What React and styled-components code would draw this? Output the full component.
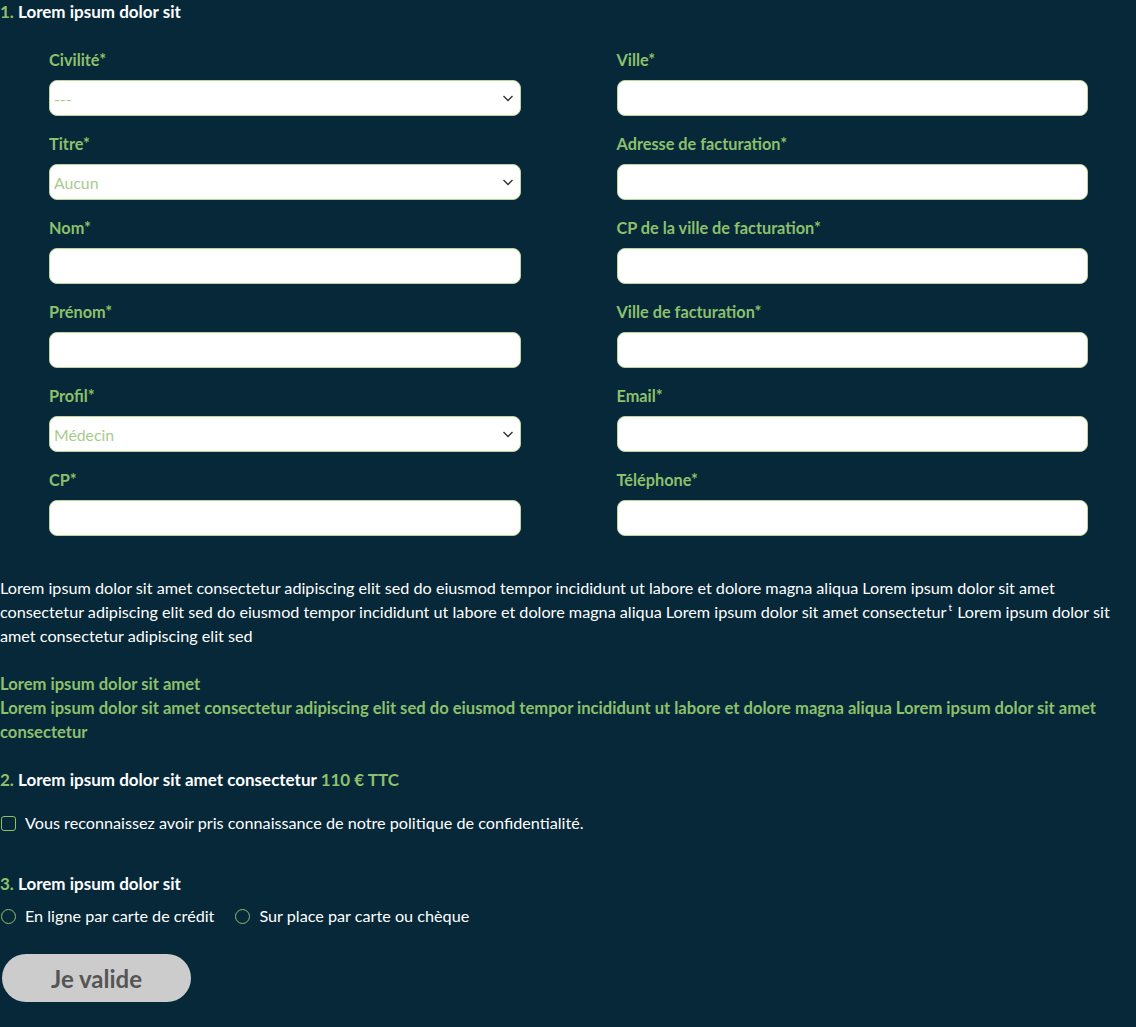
import React from "react";
import styled, { createGlobalStyle } from "styled-components";

const GREEN = "#8cc06c";
const BG = "#062838";

const Global = createGlobalStyle`
  html, body { margin: 0; padding: 0; background: ${BG}; }
  body { font-family: Lato, "Open Sans", sans-serif; color: #fff; }
`;

const Page = styled.div`
  width: 1136px;
  min-height: 1027px;
  background: ${BG};
  padding-bottom: 26px;
  box-sizing: border-box;
`;

const Heading = styled.h2`
  margin: 0;
  font-size: 17px;
  font-weight: 700;
  line-height: 24px;
  color: #fff;
  padding-top: ${(p) => p.$top || 0}px;
`;

const Num = styled.span`
  color: ${GREEN};
`;

const Price = styled.span`
  color: ${GREEN};
`;

const FormGrid = styled.div`
  display: grid;
  grid-template-columns: 1fr 1fr;
  column-gap: 96px;
  padding: 24px 48px 0 49px;
`;

const Column = styled.div`
  display: flex;
  flex-direction: column;
`;

const Field = styled.div`
  display: flex;
  flex-direction: column;
  height: 84px;
`;

const Label = styled.label`
  font-size: 16.3px;
  font-weight: 700;
  color: ${GREEN};
  line-height: 24px;
  margin-bottom: 8px;
`;

const Input = styled.input`
  box-sizing: border-box;
  width: 100%;
  height: 36px;
  border: 1px solid #bcd69a;
  border-radius: 8px;
  background: #fff;
  outline: none;
  font-family: inherit;
  font-size: 16px;
`;

const SelectWrap = styled.div`
  position: relative;
  width: 100%;
  height: 36px;
`;

const Select = styled.select`
  appearance: none;
  box-sizing: border-box;
  width: 100%;
  height: 36px;
  border: 1px solid #bcd69a;
  border-radius: 8px;
  background: #fff;
  color: #a6cc8c;
  font-family: inherit;
  font-size: 15.8px;
  padding: 0 4px;
  outline: none;
`;

const Chevron = styled.svg`
  position: absolute;
  right: 7px;
  top: 13px;
  width: 12px;
  height: 10px;
  pointer-events: none;
`;

const Paragraph = styled.p`
  margin: 24px 0 0;
  font-size: 16.2px;
  line-height: 24px;
  color: #fff;
`;

const GreenBlock = styled.p`
  margin: 24px 0 0;
  font-size: 16.6px;
  line-height: 24px;
  font-weight: 700;
  color: ${GREEN};
`;

const CheckRow = styled.label`
  display: flex;
  align-items: center;
  gap: 9px;
  margin-top: 19px;
  font-size: 16.2px;
  line-height: 24px;
  color: #fff;
`;

const Box = styled.span`
  width: 15px;
  height: 15px;
  box-sizing: border-box;
  border: 1.5px solid ${GREEN};
  border-radius: 3px;
  margin-left: 1px;
`;

const RadioRow = styled.div`
  display: flex;
  align-items: center;
  gap: 20px;
  margin-top: 8px;
`;

const RadioItem = styled.label`
  display: flex;
  align-items: center;
  gap: 9px;
  font-size: 16.2px;
  line-height: 24px;
  color: #fff;
`;

const Circle = styled.span`
  width: 15px;
  height: 15px;
  box-sizing: border-box;
  border: 1.5px solid ${GREEN};
  border-radius: 50%;
  margin-left: 1px;
`;

const Button = styled.button`
  margin: 26px 0 0 2px;
  width: 189px;
  height: 48px;
  border: none;
  border-radius: 24px;
  background: #cccccc;
  color: #555;
  font-family: inherit;
  font-size: 24px;
  font-weight: 700;
  cursor: pointer;
`;

const Sup = styled.span`
  display: inline-block;
  font-size: 10px;
  line-height: 10px;
  vertical-align: 7px;
  margin: 0 1px 0 2px;
`;

function ChevronIcon() {
  return (
    <Chevron viewBox="0 0 12 10">
      <path d="M1.5 3 L6 7.5 L10.5 3" fill="none" stroke="#333" strokeWidth="1.4" />
    </Chevron>
  );
}

function SelectField({ label, value }) {
  return (
    <Field>
      <Label>{label}</Label>
      <SelectWrap>
        <Select defaultValue={value}>
          <option value={value}>{value}</option>
        </Select>
        <ChevronIcon />
      </SelectWrap>
    </Field>
  );
}

function TextField({ label }) {
  return (
    <Field>
      <Label>{label}</Label>
      <Input type="text" />
    </Field>
  );
}

export default function App() {
  return (
    <Page>
      <Global />
      <Heading>
        <Num>1.</Num> Lorem ipsum dolor sit
      </Heading>
      <FormGrid>
        <Column>
          <SelectField label="Civilité*" value="---" />
          <SelectField label="Titre*" value="Aucun" />
          <TextField label="Nom*" />
          <TextField label="Prénom*" />
          <SelectField label="Profil*" value="Médecin" />
          <TextField label="CP*" />
        </Column>
        <Column>
          <TextField label="Ville*" />
          <TextField label="Adresse de facturation*" />
          <TextField label="CP de la ville de facturation*" />
          <TextField label="Ville de facturation*" />
          <TextField label="Email*" />
          <TextField label="Téléphone*" />
        </Column>
      </FormGrid>
      <Paragraph>
        Lorem ipsum dolor sit amet consectetur adipiscing elit sed do eiusmod tempor incididunt ut labore et dolore magna aliqua Lorem ipsum dolor sit amet consectetur adipiscing elit sed do eiusmod tempor incididunt ut labore et dolore magna aliqua Lorem ipsum dolor sit amet consectetur<Sup>t</Sup> Lorem ipsum dolor sit amet consectetur adipiscing elit sed
      </Paragraph>
      <GreenBlock>
        Lorem ipsum dolor sit amet
        <br />
        Lorem ipsum dolor sit amet consectetur adipiscing elit sed do eiusmod tempor incididunt ut labore et dolore magna aliqua Lorem ipsum dolor sit amet consectetur
      </GreenBlock>
      <Heading $top={24}>
        <Num>2.</Num> Lorem ipsum dolor sit amet consectetur <Price>110 € TTC</Price>
      </Heading>
      <CheckRow>
        <Box />
        Vous reconnaissez avoir pris connaissance de notre politique de confidentialité.
      </CheckRow>
      <Heading $top={37}>
        <Num>3.</Num> Lorem ipsum dolor sit
      </Heading>
      <RadioRow>
        <RadioItem>
          <Circle />
          En ligne par carte de crédit
        </RadioItem>
        <RadioItem>
          <Circle />
          Sur place par carte ou chèque
        </RadioItem>
      </RadioRow>
      <Button>Je valide</Button>
    </Page>
  );
}
